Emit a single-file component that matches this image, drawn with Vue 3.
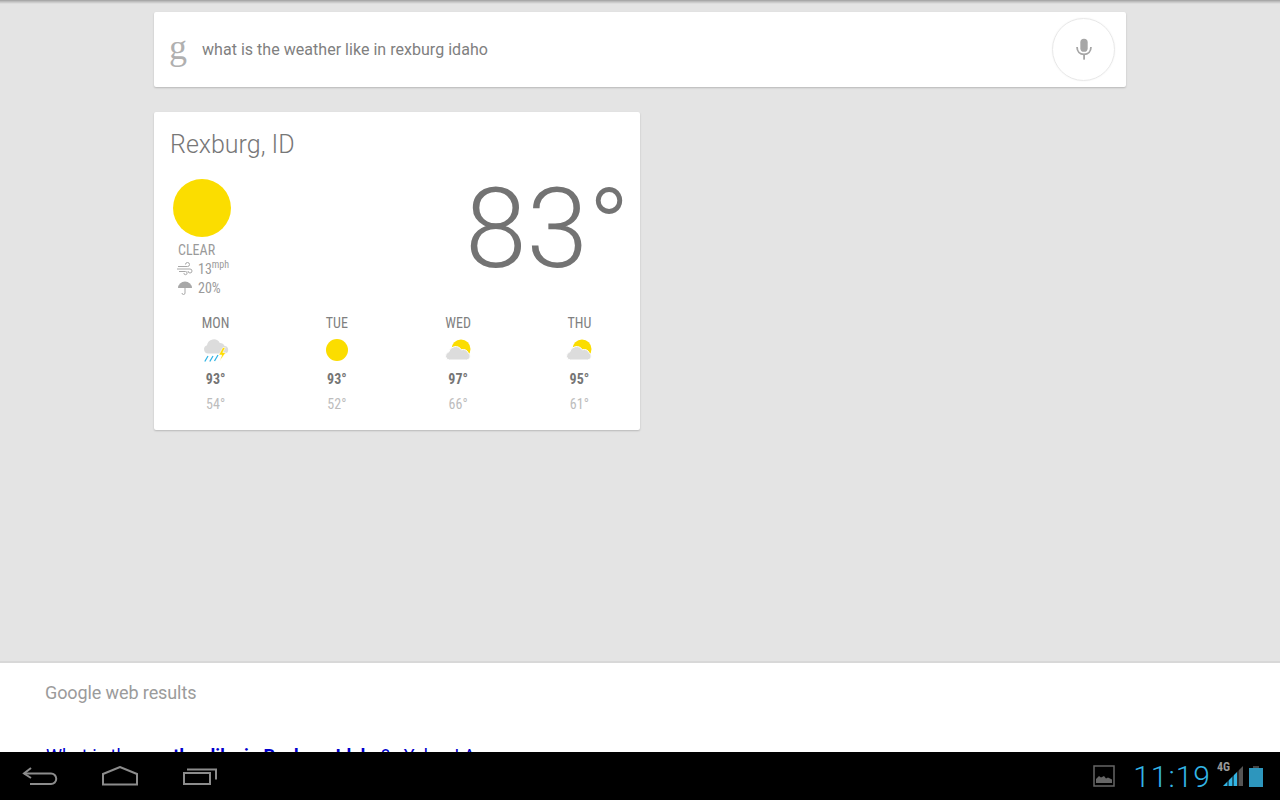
<template>
  <div class="screen">
    <main class="content">
      <div class="search-bar">
        <span class="g-logo">g</span>
        <span class="query">what is the weather like in rexburg idaho</span>
        <div class="mic">
          <svg width="18" height="22" viewBox="0 0 22 26">
            <rect x="6.5" y="0.5" width="9" height="16" rx="4.5" fill="#a6a6a6" />
            <path d="M2.500 10.500c0 5.500 3.500 9 8.500 9s8.500-3.500 8.500-9" fill="none" stroke="#a6a6a6" stroke-width="2.200" />
            <rect x="10" y="19" width="2.200" height="7" fill="#a6a6a6" />
          </svg>
        </div>
      </div>

      <section class="card">
        <h2 class="city">Rexburg, ID</h2>
        <div class="now">
          <div class="now-left">
            <div class="big-sun"></div>
            <div class="cond">CLEAR</div>
            <div class="stat first">
              <svg width="16" height="14" viewBox="0 0 16 14" fill="none" stroke="#a8a8a8" stroke-width="1">
                <path d="M1 4.500h9.500a2 2 0 1 0-2-2" />
                <path d="M0 7h13a2 2 0 1 1-2 2" />
                <path d="M2 9.500h6.500a1.600 1.600 0 1 1-1.600 1.600" />
              </svg>
              <span>13<sup>mph</sup></span>
            </div>
            <div class="stat">
              <svg width="16" height="14" viewBox="0 0 16 14">
                <path d="M1 7a7 6.500 0 0 1 14 0z" fill="#a8a8a8" />
                <path d="M8 7v5a1.500 1.500 0 0 1-3 0" fill="none" stroke="#a8a8a8" stroke-width="1" />
              </svg>
              <span>20%</span>
            </div>
          </div>
          <div class="temp">83°</div>
        </div>

        <div class="forecast">
          <div v-for="d in days" :key="d.name" class="day">
            <div class="day-name">{{ d.name }}</div>
            <div class="day-icon">
              <svg v-if="d.icon === 'storm'" width="26" height="24" viewBox="0 0 26 24">
                <path d="M5 15.500a4.200 4.200 0 0 1-1-8.200 6.800 6.800 0 0 1 12.800-2.300 5 5 0 0 1 4.800 3 3.800 3.800 0 0 1 .6 7.500z" fill="#dcdcdc" />
                <path d="M1.800 23.500l3.200-5.500M6.800 23.500l3.200-5.500M11.500 23l3.500-6" stroke="#33b5e5" stroke-width="1.300" fill="none" />
                <path d="M19.800 9.500l-4 7.500h3l-2 6 6-8.500h-3l2.500-5z" fill="#ffdd00" stroke="#fff" stroke-width=".6" />
              </svg>
              <div v-else-if="d.icon === 'sun'" class="small-sun"></div>
              <svg v-else width="26" height="22" viewBox="0 0 26 22">
                <circle cx="16" cy="10" r="9.500" fill="#fbdd00" />
                <path d="M4.500 21h17a3.800 3.800 0 0 0 1.800-7.100 6 6 0 0 0-7-3.100 6.900 6.900 0 0 0-12.600 2.300 4 4 0 0 0 .8 7.900z" fill="#dcdcdc" stroke="#fff" stroke-width="1" />
              </svg>
            </div>
            <div class="hi">{{ d.hi }}°</div>
            <div class="lo">{{ d.lo }}°</div>
          </div>
        </div>
      </section>
    </main>

    <section class="results">
      <div class="results-title">Google web results</div>
      <a class="result-link">What is the <b>weather like in Rexburg Idaho</b>? - Yahoo! A</a>
    </section>

    <nav class="navbar">
      <div class="nav-buttons">
        <svg width="36" height="20" viewBox="0 0 36 20" fill="none" stroke="#8c8c8c" stroke-width="2">
          <path d="M9 2L2 7.500 9 12" />
          <path d="M2 7.500h27a4.500 4.500 0 0 1 0 10.500H8" stroke-linejoin="round" />
        </svg>
        <svg width="38" height="20" viewBox="0 0 38 20" fill="none" stroke="#8c8c8c" stroke-width="2">
          <path d="M2 8L19 1l17 7v10.500H2z" />
        </svg>
        <svg width="36" height="20" viewBox="0 0 36 20" fill="none" stroke="#8c8c8c" stroke-width="2">
          <rect x="2" y="7" width="26" height="11" />
          <path d="M5 3.500h29v10" />
        </svg>
      </div>
      <div class="tray">
        <svg width="22" height="22" viewBox="0 0 22 22">
          <rect x="1" y="1" width="20" height="20" fill="none" stroke="#666" stroke-width="1.500" />
          <path d="M3 18v-4l3-3 2 1.500 3-1.500 2 2.500 2-1 4 2v3.500z" fill="#666" />
        </svg>
        <span class="clock">11:19</span>
        <div class="signal">
          <span class="net">4G</span>
          <svg width="20" height="20" viewBox="0 0 20 20">
            <path d="M0 20L14 6v14z" fill="#33b5e5" />
            <path d="M14 6l6-6v20h-6z" fill="#555" />
            <path d="M5 12v8M10 8v12M15 4v16" stroke="#000" stroke-width="1" />
          </svg>
        </div>
        <svg width="14" height="21" viewBox="0 0 14 21">
          <rect x="4" y="0" width="6" height="2" fill="#444" />
          <rect x="0" y="2" width="14" height="19" fill="#2d96bd" />
        </svg>
      </div>
    </nav>
  </div>
</template>

<script setup>
const days = [
  { name: 'MON', icon: 'storm', hi: 93, lo: 54 },
  { name: 'TUE', icon: 'sun', hi: 93, lo: 52 },
  { name: 'WED', icon: 'cloud', hi: 97, lo: 66 },
  { name: 'THU', icon: 'cloud', hi: 95, lo: 61 }
]
</script>

<style>
html, body {
  margin: 0;
  background: #e4e4e4;
}
</style>

<style scoped>
.screen {
  width: 1280px;
  height: 800px;
  overflow: hidden;
  display: flex;
  flex-direction: column;
  font-family: Roboto, sans-serif;
  background: #e4e4e4;
}
.content {
  height: 661px;
  box-sizing: border-box;
  padding: 12px 154px 0;
  flex: none;
  background: linear-gradient(#9c9c9c, #b4b4b4 1px, #d4d4d4 3px, #e4e4e4 4px);
}
.search-bar {
  height: 75px;
  display: flex;
  align-items: center;
  background: #fff;
  border-radius: 2px;
  box-shadow: 0 1px 2px rgba(0, 0, 0, .2);
}
.g-logo {
  width: 48px;
  margin-top: -6px;
  padding-left: 15px;
  box-sizing: border-box;
  font: 36px "Liberation Serif", serif;
  color: #b0b0b0;
}
.query {
  flex: 1;
  font-size: 16px;
  letter-spacing: .03px;
  color: #808080;
}
.mic {
  width: 61px;
  height: 61px;
  margin: -1px 11px 0 0;
  border: 1px solid #e8e8e8;
  border-radius: 50%;
  box-shadow: 0 0 2px rgba(0, 0, 0, .06);
  display: flex;
  align-items: center;
  justify-content: center;
}
.card {
  width: 486px;
  height: 318px;
  margin-top: 25px;
  background: #fff;
  border-radius: 2px;
  box-shadow: 0 1px 2px rgba(0, 0, 0, .2);
  overflow: hidden;
}
.city {
  margin: 0;
  padding: 16px 0 0 16px;
  font-size: 25px;
  line-height: 33px;
  font-weight: 300;
  color: #777;
}
.now {
  display: flex;
  justify-content: space-between;
  height: 126px;
  margin-top: 18px;
}
.now-left {
  padding-left: 19px;
}
.big-sun {
  width: 58px;
  height: 58px;
  border-radius: 50%;
  background: #fbdd00;
}
.cond {
  margin: 6px 0 0 5px;
  font-size: 14px;
  line-height: 15px;
  color: #9a9a9a;
  font-stretch: 75%;
}
.stat {
  display: flex;
  align-items: center;
  gap: 4px;
  height: 19px;
  margin-left: 4px;
  font-size: 14px;
  color: #9a9a9a;
  font-stretch: 75%;
}
.stat.first {
  margin-top: 1px;
}
.stat span {
  margin-left: 1px;
}
.stat sup {
  font-size: 10px;
  line-height: 0;
}
.temp {
  margin-right: 10px;
  margin-top: -12px;
  font-size: 111px;
  line-height: 124px;
  font-weight: 300;
  color: #737373;
}
.forecast {
  display: grid;
  grid-template-columns: repeat(4, 1fr);
  margin-top: 9px;
  padding-left: 1px;
}
.day {
  display: flex;
  flex-direction: column;
  align-items: center;
}
.day-name {
  font-size: 14px;
  line-height: 18px;
  color: #808080;
  font-stretch: 75%;
}
.day-icon {
  height: 28px;
  margin-top: 4px;
  display: flex;
  align-items: center;
  justify-content: center;
}
.small-sun {
  width: 22px;
  height: 22px;
  border-radius: 50%;
  background: #fbdd00;
}
.hi {
  margin-top: 6px;
  font-size: 14px;
  line-height: 18px;
  font-weight: 700;
  color: #757575;
  font-stretch: 75%;
}
.lo {
  margin-top: 7px;
  font-size: 14px;
  line-height: 18px;
  color: #bdbdbd;
  font-stretch: 75%;
}
.results {
  height: 91px;
  box-sizing: border-box;
  flex: none;
  padding: 20px 45px 0;
  overflow: hidden;
  background: #fff;
  border-top: 2px solid #d8d8d8;
}
.results-title {
  font-size: 18px;
  line-height: 20px;
  letter-spacing: -.1px;
  color: #9b9b9b;
}
.result-link {
  display: block;
  margin: 41px 0 0 1px;
  font-size: 18px;
  line-height: 24px;
  letter-spacing: .05px;
  color: #0000cc;
  white-space: nowrap;
}
.navbar {
  height: 48px;
  flex: none;
  background: #000;
  display: flex;
  align-items: center;
  justify-content: space-between;
  padding: 0 17px 0 22px;
}
.nav-buttons {
  display: flex;
  align-items: center;
  gap: 43px;
}
.tray {
  display: flex;
  align-items: center;
  gap: 6px;
}
.clock {
  margin-left: 12px;
  font-size: 30px;
  font-weight: 300;
  letter-spacing: 1px;
  color: #33b5e5;
}
.signal {
  position: relative;
  width: 20px;
  height: 20px;
  margin-left: 6px;
}
.net {
  position: absolute;
  left: -6px;
  top: -6px;
  font-size: 12px;
  font-weight: 700;
  color: #999;
  font-stretch: 75%;
}
</style>
